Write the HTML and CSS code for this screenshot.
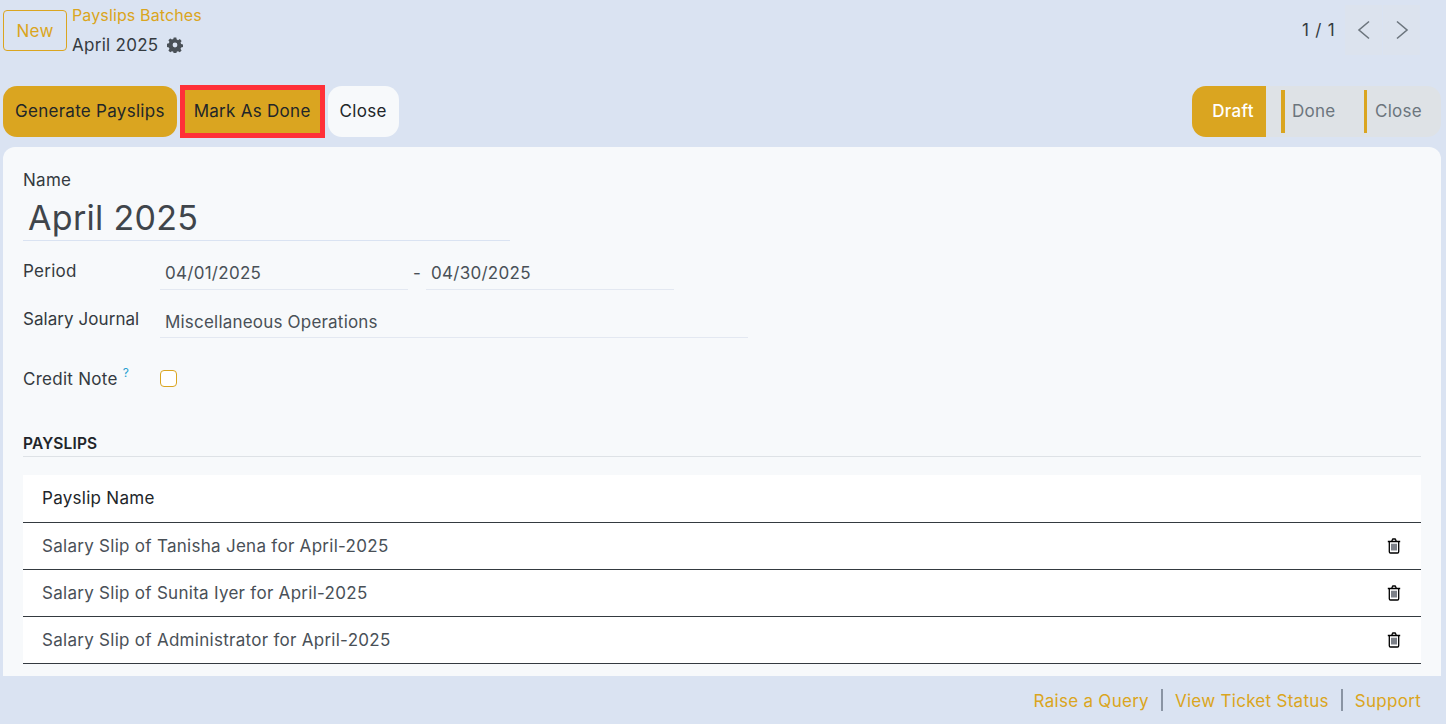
FILE: index.html
```html
<!DOCTYPE html>
<html lang="en">
<head>
<meta charset="utf-8">
<title>April 2025</title>
<link rel="stylesheet" href="styles.css">
</head>
<body>
<div class="page">
  <header class="control">
    <div class="top-row">
      <button class="btn-new">New</button>
      <div class="crumbs">
        <a class="crumb-link">Payslips Batches</a>
        <div class="crumb-current">
          <span>April 2025</span>
          <svg class="gear" viewBox="0 0 16 16" width="16" height="16"><path fill="#495057" fill-rule="evenodd" d="M6.7.6h2.6l.4 2a5.5 5.5 0 0 1 1.3.6l1.8-1.1 1.8 1.8-1.1 1.8c.3.4.5.8.6 1.3l2 .4v2.6l-2 .4a5.5 5.5 0 0 1-.6 1.3l1.1 1.8-1.8 1.8-1.8-1.1a5.5 5.5 0 0 1-1.3.6l-.4 2H6.7l-.4-2a5.5 5.5 0 0 1-1.3-.6l-1.8 1.1-1.8-1.8 1.1-1.8a5.5 5.5 0 0 1-.6-1.3l-2-.4V6.7l2-.4c.1-.5.3-.9.6-1.3L1.4 3.2l1.8-1.8L5 2.5c.4-.3.8-.5 1.3-.6zM8 5.6a2.4 2.4 0 1 0 0 4.8 2.4 2.4 0 0 0 0-4.800z"/></svg>
        </div>
      </div>
      <div class="pager">
        <span class="pager-count">1 / 1</span>
        <div class="pager-btns">
          <button class="pager-btn"><svg viewBox="0 0 14 20" width="14" height="20"><path d="M12 1.500 2 10l10 8.500" fill="none" stroke="#6c757d" stroke-width="1.600"/></svg></button>
          <button class="pager-btn"><svg viewBox="0 0 14 20" width="14" height="20"><path d="M2 1.500 12 10 2 18.500" fill="none" stroke="#6c757d" stroke-width="1.600"/></svg></button>
        </div>
      </div>
    </div>
    <div class="action-row">
      <div class="actions">
        <button class="btn btn-gold">Generate Payslips</button>
        <button class="btn btn-gold btn-marked">Mark As Done</button>
        <button class="btn btn-light">Close</button>
      </div>
      <div class="status">
        <span class="stage stage-active">Draft</span>
        <span class="stage stage-done">Done</span>
        <span class="stage stage-close">Close</span>
      </div>
    </div>
  </header>

  <main class="sheet">
    <div class="field-name">
      <label class="label">Name</label>
      <div class="name-value">April 2025</div>
    </div>
    <div class="form-row row-period">
      <label class="label col-label">Period</label>
      <div class="date-range">
        <div class="input input-date">04/01/2025</div>
        <span class="dash">-</span>
        <div class="input input-date">04/30/2025</div>
      </div>
    </div>
    <div class="form-row row-journal">
      <label class="label col-label">Salary Journal</label>
      <div class="input input-wide">Miscellaneous Operations</div>
    </div>
    <div class="form-row row-credit">
      <label class="label col-label">Credit Note<sup class="help">?</sup></label>
      <span class="checkbox"></span>
    </div>

    <div class="section-title">PAYSLIPS</div>

    <table class="list">
      <thead><tr><th>Payslip Name</th><th class="trash-col"></th></tr></thead>
      <tbody>
        <tr><td>Salary Slip of Tanisha Jena for April-2025</td><td class="trash-col"><svg class="trash" viewBox="0 0 14 16" width="14" height="16"><use href="#trash"/></svg></td></tr>
        <tr><td>Salary Slip of Sunita Iyer for April-2025</td><td class="trash-col"><svg class="trash" viewBox="0 0 14 16" width="14" height="16"><use href="#trash"/></svg></td></tr>
        <tr><td>Salary Slip of Administrator for April-2025</td><td class="trash-col"><svg class="trash" viewBox="0 0 14 16" width="14" height="16"><use href="#trash"/></svg></td></tr>
      </tbody>
    </table>
  </main>

  <footer class="footer">
    <a>Raise a Query</a>
    <span class="sep"></span>
    <a>View Ticket Status</a>
    <span class="sep"></span>
    <a>Support</a>
  </footer>
</div>
<svg class="defs" width="0" height="0">
  <symbol id="trash" viewBox="0 0 14 16">
    <path d="M.8 3.500h12.400M2.300 3.500v10.200c0 .8.500 1.300 1.200 1.300h7c.7 0 1.200-.5 1.200-1.300V3.500M4.700 3.500l.6-1.800c.1-.4.4-.7.8-.7h1.800c.4 0 .7.300.8.700l.6 1.800" fill="none" stroke="#000" stroke-width="1.300"/>
    <path d="M5 5.800v6.800M7 5.800v6.800M9 5.800v6.800" fill="none" stroke="#111827" stroke-width="1.100"/>
  </symbol>
</svg>
</body>
</html>
```

FILE: styles.css
```css
* { box-sizing: border-box; }
html, body { margin: 0; height: 100%; overflow: hidden; }
body { font-family: Inter, "Liberation Sans", sans-serif; font-size: 17px; letter-spacing: .28px; color: #212529; background: #dae3f2; }
button { font: inherit; letter-spacing: inherit; border: 0; padding: 0; cursor: pointer; }
.page { width: 1446px; height: 724px; display: flex; flex-direction: column; overflow: hidden; }

.control { height: 147px; flex: none; padding: 0 26px 0 3px; display: flex; flex-direction: column; }
.top-row { height: 86px; display: flex; align-items: flex-start; }
.btn-new { margin-top: 10px; width: 64px; height: 41px; background: transparent; border: 1px solid #daa520; border-radius: 4px; color: #daa520; }
.crumbs { margin-left: 5px; padding-top: 5px; display: flex; flex-direction: column; }
.crumb-link { color: #daa520; font-size: 16px; letter-spacing: .13px; line-height: 20px; }
.crumb-current { margin-top: 10px; display: flex; align-items: center; gap: 9px; line-height: 20px; color: #343a40; }
.pager { margin-left: auto; display: flex; align-items: flex-start; padding-top: 5px; }
.pager-count { line-height: 50px; margin-right: 10px; color: #343a40; word-spacing: 1px; }
.pager-btns { display: flex; gap: 1px; }
.pager-btn { width: 37px; height: 50px; background: #dce3ee; display: flex; align-items: center; justify-content: center; }

.action-row { height: 51px; display: flex; justify-content: space-between; margin-right: -21px; }
.actions { display: flex; gap: 3px; }
.btn { height: 51px; border-radius: 14px; padding: 0 12px 2px; color: #212529; }
.btn-gold { background: #daa520; }
.btn-marked { height: 53px; margin: -1px 0; border: 5px solid #ff3038; border-radius: 0; padding: 0 9px 2px; }
.btn-light { background: #f7f9fb; }
.status { display: flex; width: 249px; background: #dee2e6; border-radius: 14px; overflow: hidden; color: #6c757d; }
.stage { display: flex; align-items: center; height: 51px; padding-bottom: 2px; position: relative; }
.stage-active { width: 74px; justify-content: center; padding-left: 8px; background: #daa520; color: #fff; font-weight: 500; }
.stage-done { width: 99px; padding-left: 26px; }
.stage-close { flex: 1; padding-left: 10px; }
.stage-done::before, .stage-close::before { content: ""; position: absolute; top: 4px; bottom: 4px; background: #daa520; }
.stage-done::before { left: 15px; width: 4px; }
.stage-close::before { left: -1px; width: 3px; }

.sheet { flex: 1; min-height: 0; margin: 0 5px 0 3px; padding: 23px 20px 0; background: #f7f9fb; border-radius: 12px 12px 0 0; color: #212529; overflow: hidden; }
.label { display: block; line-height: 20px; color: #343a40; }
.field-name { height: 71px; width: 487px; border-bottom: 1px solid #dae3f2; }
.name-value { font-size: 34px; letter-spacing: .3px; line-height: 44px; padding-left: 5px; margin-top: 6px; color: #3f454b; }
.form-row { display: flex; }
.col-label { width: 137px; flex: none; }
.row-period { height: 49px; padding-top: 20px; }
.row-journal { height: 49px; padding-top: 19px; }
.row-journal .col-label { letter-spacing: .06px; }
.input { height: 37px; padding-left: 5px; border-bottom: 1px solid #e3e8f1; line-height: 20px; color: #495057; }
.date-range { display: flex; margin-top: -9px; }
.input-date { width: 248px; height: 38px; padding-top: 11px; }
.dash { width: 18px; text-align: center; padding-top: 11px; line-height: 20px; color: #495057; }
.row-journal .input-wide { width: 588px; margin-top: -6px; padding-top: 9px; height: 35px; letter-spacing: .2px; }
.row-credit { height: 85px; padding-top: 30px; align-items: flex-start; }
.help { color: #2a9fd0; font-size: 12px; line-height: 0; margin-left: 5px; position: relative; top: -1px; vertical-align: super; }
.checkbox { width: 17px; height: 17px; margin-top: 1px; border: 1px solid #daa520; border-radius: 4px; background: #fff; }

.section-title { height: 23px; margin-top: 10px; font-size: 15.500px; letter-spacing: .15px; line-height: 20px; font-weight: 600; color: #212529; border-bottom: 1px solid #dee2e6; }
.list { width: 100%; margin-top: 18px; border-collapse: collapse; background: #fff; }
.list th, .list td { height: 47px; padding: 0 0 0 19px; text-align: left; font-weight: 400; border-bottom: 1px solid #343a40; }
.list th { color: #212529; }
.list td { color: #495057; }
.list .trash-col { width: 50px; padding: 0; }
.trash { display: block; margin-left: 16px; }
.defs { position: absolute; }

.footer { height: 48px; flex: none; padding: 0 25px 0 0; display: flex; justify-content: flex-end; align-items: center; color: #daa520; background: #dae3f2; }
.footer a { line-height: 20px; padding-top: 1px; }
.sep { width: 2px; height: 22px; background: #8a94a3; margin: 0 12px; }
```
